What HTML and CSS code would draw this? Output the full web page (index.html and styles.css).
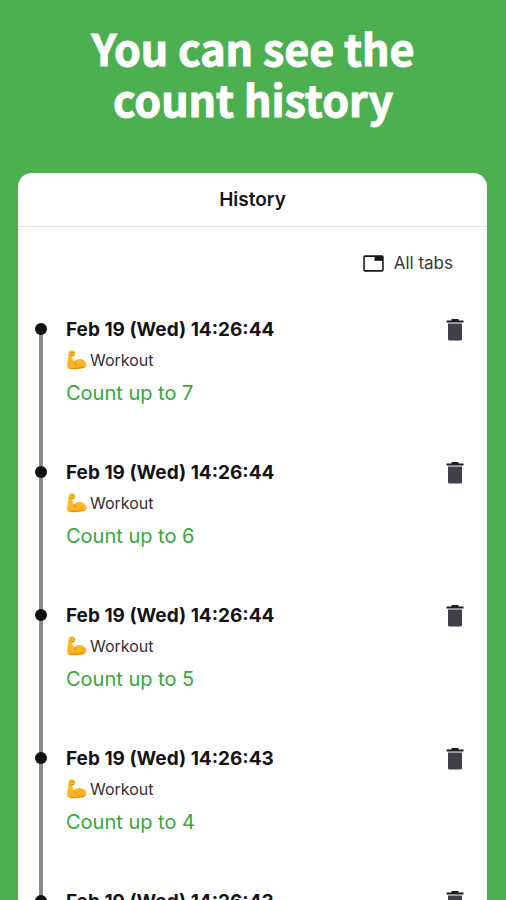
FILE: index.html
```
<!DOCTYPE html>
<html lang="en">
<head>
<meta charset="utf-8">
<meta name="viewport" content="width=device-width, initial-scale=1">
<title>History</title>
<link rel="stylesheet" href="styles.css">
</head>
<body>
<svg class="defs" aria-hidden="true">
  <defs>
    <linearGradient id="skin" x1="0" y1="0" x2="0" y2="1">
      <stop offset="0" stop-color="#fdc22c"/>
      <stop offset="1" stop-color="#f8b01e"/>
    </linearGradient>
    <symbol id="arm" viewBox="0 0 20 20">
      <path fill="url(#skin)" d="M2.3 1.2C3.5.1 6.200 0 7.300 1.200C8.300 2.300 8.500 4.800 7.500 5.700C6.700 6.400 5.700 5.900 5.500 6.600C5.200 8.200 6 10.300 7 11.700C8.400 9.500 11 8.600 13.500 9.100C16.800 9.700 19.300 12 19.500 14.800C19.600 17 17.500 18.300 15 18.600C11.500 19.300 4.500 19.700 1.700 18.700C.3 18.200 0 16.500.3 14.500C.7 11 1.200 7 1.600 4.200C1.700 3 1.600 2 2.300 1.200Z"/>
      <path fill="none" stroke="#d98a12" stroke-width="1" stroke-linecap="round" d="M2.500 4.800Q4.500 6.300 7 5.500M4.200 2.600L7.600 3M7 11.700Q7.200 13.500 9.300 14.200M4 18.400Q11 18.800 17 17.200"/>
    </symbol>
    <symbol id="trash" viewBox="0 0 18 22">
      <path fill="#1d1c25" d="M5.500 0h7v1.500H17.500v2H.5v-2h5z"/>
      <path fill="#403f4b" d="M2 4.500h14v15.500q0 1.500-1.500 1.500h-11q-1.500 0-1.500-1.500z"/>
    </symbol>
  </defs>
</svg>
<h1 class="headline">You can see the<br>count history</h1>
<main class="screen">
  <header class="bar"><h2 class="bar-title">History</h2></header>
  <div class="filter">
    <button class="filter-button" type="button">
      <svg class="tab-icon" viewBox="0 0 20 16" aria-hidden="true">
        <rect x="1" y="1" width="18" height="14" rx="1" fill="none" stroke="#18181a" stroke-width="1.500"/>
        <path fill="#18181a" d="M11 1h8v4.500h-8z"/>
      </svg>
      All tabs
    </button>
  </div>
  <ol class="timeline">
    <li class="entry">
      <div class="details">
        <time class="date">Feb 19 (Wed) 14:26:44</time>
        <p class="tab"><svg class="arm" aria-hidden="true"><use href="#arm"/></svg>Workout</p>
        <p class="count">Count up to 7</p>
      </div>
      <button class="delete" type="button" aria-label="Delete"><svg class="trash"><use href="#trash"/></svg></button>
    </li>
    <li class="entry">
      <div class="details">
        <time class="date">Feb 19 (Wed) 14:26:44</time>
        <p class="tab"><svg class="arm" aria-hidden="true"><use href="#arm"/></svg>Workout</p>
        <p class="count">Count up to 6</p>
      </div>
      <button class="delete" type="button" aria-label="Delete"><svg class="trash"><use href="#trash"/></svg></button>
    </li>
    <li class="entry">
      <div class="details">
        <time class="date">Feb 19 (Wed) 14:26:44</time>
        <p class="tab"><svg class="arm" aria-hidden="true"><use href="#arm"/></svg>Workout</p>
        <p class="count">Count up to 5</p>
      </div>
      <button class="delete" type="button" aria-label="Delete"><svg class="trash"><use href="#trash"/></svg></button>
    </li>
    <li class="entry">
      <div class="details">
        <time class="date">Feb 19 (Wed) 14:26:43</time>
        <p class="tab"><svg class="arm" aria-hidden="true"><use href="#arm"/></svg>Workout</p>
        <p class="count">Count up to 4</p>
      </div>
      <button class="delete" type="button" aria-label="Delete"><svg class="trash"><use href="#trash"/></svg></button>
    </li>
    <li class="entry">
      <div class="details">
        <time class="date">Feb 19 (Wed) 14:26:43</time>
      </div>
      <button class="delete" type="button" aria-label="Delete"><svg class="trash"><use href="#trash"/></svg></button>
    </li>
  </ol>
</main>
</body>
</html>
```
FILE: styles.css
```
* {
  box-sizing: border-box;
  margin: 0;
  padding: 0;
}

body {
  display: flex;
  flex-direction: column;
  height: 100vh;
  overflow: hidden;
  background: #4caf50;
  color: #141416;
  font-family: Inter, "Liberation Sans", sans-serif;
}

button {
  border: 0;
  background: none;
  color: inherit;
  font: inherit;
  cursor: pointer;
}

.defs {
  position: absolute;
  width: 0;
  height: 0;
}

.headline {
  padding: 22px 0 49px;
  color: #fff;
  font-family: "Noto Sans CJK JP", "Noto Sans", sans-serif;
  font-size: 43px;
  font-weight: 700;
  line-height: 51px;
  text-align: center;
  -webkit-text-stroke: 1px #fff;
}

.screen {
  flex: 1;
  min-height: 0;
  margin: 0 19px 0 18px;
  overflow: hidden;
  border-radius: 14px 14px 0 0;
  background: #fff;
}

.bar {
  padding: 12px 0 11px;
  border-bottom: 1px solid #e4e4e6;
  text-align: center;
}

.bar-title {
  font-size: 19px;
  font-weight: 600;
  line-height: 30px;
}

.filter {
  display: flex;
  justify-content: flex-end;
  padding: 20px 34px 34px;
}

.filter-button {
  display: flex;
  align-items: center;
  gap: 10px;
  color: #38383a;
  font-size: 17px;
  line-height: 32px;
}

.tab-icon {
  width: 21px;
  height: 17px;
}

.timeline {
  list-style: none;
}

.entry {
  position: relative;
  display: flex;
  justify-content: space-between;
  align-items: flex-start;
  min-height: 143px;
  padding: 0 20px 0 48px;
}

.entry::before {
  content: "";
  position: absolute;
  top: 16px;
  left: 21px;
  width: 4px;
  height: 100%;
  background: #8b8b8b;
}

.entry::after {
  content: "";
  position: absolute;
  top: 10px;
  left: 17px;
  width: 12px;
  height: 12px;
  border-radius: 50%;
  background: #111;
}

.entry + .entry::after {
  z-index: 1;
}

.date {
  display: block;
  font-size: 19px;
  font-weight: 700;
  line-height: 34px;
}

.tab {
  display: flex;
  align-items: center;
  gap: 3px;
  color: #303032;
  font-size: 16px;
  line-height: 26px;
}

.arm {
  width: 20px;
  height: 20px;
  margin-left: 1px;
}

.count {
  color: #35a83c;
  font-size: 20px;
  line-height: 40px;
}

.delete {
  display: flex;
  padding: 6px 3px;
}

.trash {
  width: 18px;
  height: 22px;
}
```
